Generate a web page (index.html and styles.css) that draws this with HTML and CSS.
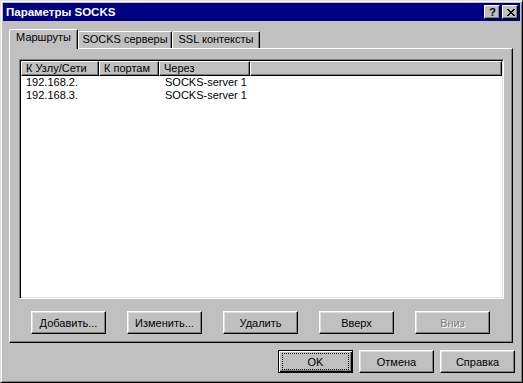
FILE: index.html
```html
<!DOCTYPE html>
<html lang="ru">
<head>
<meta charset="utf-8">
<title>Параметры SOCKS</title>
<link rel="stylesheet" href="styles.css">
</head>
<body>
<div class="window">
  <div class="titlebar">
    <span class="title">Параметры SOCKS</span>
    <div class="tbtns">
      <span class="tbtn help">?</span>
      <span class="tbtn close">
        <svg width="8" height="7" viewBox="0 0 8 7" shape-rendering="crispEdges">
          <path d="M0 0h2v1h-2zM6 0h2v1h-2zM1 1h2v1h-2zM5 1h2v1h-2zM2 2h4v1h-4zM3 3h2v1h-2zM2 4h4v1h-4zM1 5h2v1h-2zM5 5h2v1h-2zM0 6h2v1h-2zM6 6h2v1h-2z" fill="#000"/>
        </svg>
      </span>
    </div>
  </div>
  <div class="client">
    <div class="tabs">
      <div class="tab active t1">Маршруты</div>
      <div class="tab t2">SOCKS серверы</div>
      <div class="tab t3">SSL контексты</div>
    </div>
    <div class="panel">
      <div class="list">
        <div class="lhead">
          <div class="hc c1">К Узлу/Сети</div>
          <div class="hc c2">К портам</div>
          <div class="hc c3">Через</div>
          <div class="hc fill"></div>
        </div>
        <div class="row">
          <div class="cell c1">192.168.2.</div>
          <div class="cell c2"></div>
          <div class="cell c3">SOCKS-server 1</div>
        </div>
        <div class="row">
          <div class="cell c1">192.168.3.</div>
          <div class="cell c2"></div>
          <div class="cell c3">SOCKS-server 1</div>
        </div>
      </div>
      <div class="btnrow">
        <div class="btn">Добавить...</div>
        <div class="btn">Изменить...</div>
        <div class="btn">Удалить</div>
        <div class="btn">Вверх</div>
        <div class="btn disabled">Вниз</div>
      </div>
    </div>
    <div class="footer">
      <div class="btn default">OK</div>
      <div class="btn">Отмена</div>
      <div class="btn">Справка</div>
    </div>
  </div>
</div>
</body>
</html>
```
FILE: styles.css
```css
html, body {
  margin: 0;
  padding: 0;
  background: #c0c0c0;
}
body {
  font-family: "Liberation Sans", Arial, sans-serif;
  font-size: 11px;
  color: #000;
}
.window {
  width: 523px;
  height: 383px;
  box-sizing: border-box;
  background: #c0c0c0;
  border: 1px solid;
  border-color: #dfdfdf #000 #000 #dfdfdf;
  box-shadow: inset 1px 1px #fff, inset -1px -1px #808080;
  padding: 2px;
}
.titlebar {
  height: 18px;
  background: #000080;
  display: flex;
  align-items: center;
  justify-content: space-between;
  padding: 0 2px 0 3px;
}
.title {
  color: #fff;
  font-weight: bold;
  font-size: 11.5px;
  line-height: 18px;
}
.tbtns {
  display: flex;
  gap: 2px;
}
.tbtn {
  width: 16px;
  height: 14px;
  box-sizing: border-box;
  background: #c0c0c0;
  border: 1px solid;
  border-color: #fff #000 #000 #fff;
  box-shadow: inset -1px -1px #808080;
  display: flex;
  align-items: center;
  justify-content: center;
}
.help {
  font-weight: bold;
  font-size: 11px;
  line-height: 12px;
  padding-left: 1px;
}
.close svg {
  display: block;
  margin-left: 1px;
  margin-top: 0;
}
.client {
  padding: 8px 0 0 6px;
}
.tabs {
  display: flex;
  align-items: flex-end;
  height: 19px;
}
.tab {
  height: 17px;
  box-sizing: border-box;
  border: 1px solid;
  border-bottom: none;
  border-color: #fff #000 transparent #fff;
  box-shadow: inset -1px 0 #808080;
  border-radius: 2px 2px 0 0;
  background: #c0c0c0;
  padding-top: 1px;
  line-height: 13px;
  text-align: center;
  white-space: nowrap;
}
.tab.active {
  height: 20px;
  margin-bottom: -1px;
  position: relative;
  z-index: 1;
}
.t1 { width: 69px; }
.t2 { width: 94px; }
.t3 { width: 88px; }
.panel {
  width: 504px;
  height: 295px;
  box-sizing: border-box;
  border: 1px solid;
  border-color: #fff #000 #000 #fff;
  box-shadow: inset -1px -1px #808080;
  padding-top: 10px;
}
.list {
  width: 485px;
  height: 240px;
  box-sizing: border-box;
  margin-left: 9px;
  border: 1px solid;
  border-color: #808080 #fff #fff #808080;
  padding: 1px;
  box-shadow: inset 1px 1px #000, inset -1px -1px #dfdfdf;
  background: #fff;
}
.lhead {
  display: flex;
  height: 15px;
}
.hc {
  box-sizing: border-box;
  height: 15px;
  border: 1px solid;
  border-color: #fff #000 #000 #fff;
  box-shadow: inset -1px -1px #808080;
  background: #c0c0c0;
  padding-left: 4px;
  line-height: 13px;
  white-space: nowrap;
  overflow: hidden;
}
.c1 { width: 78px; flex: none; }
.c2 { width: 60px; flex: none; }
.c3 { width: 91px; flex: none; }
.fill { flex: 1; }
.row {
  display: flex;
  height: 13px;
  line-height: 13px;
}
.cell {
  box-sizing: border-box;
  padding-left: 5px;
  white-space: nowrap;
}
.row .c3 { padding-left: 6px; }
.btnrow {
  display: flex;
  gap: 21px;
  margin-top: 12px;
  padding-left: 21px;
}
.btn {
  width: 75px;
  height: 23px;
  box-sizing: border-box;
  background: #c0c0c0;
  border: 1px solid;
  border-color: #fff #000 #000 #fff;
  box-shadow: inset -1px -1px #808080, inset 1px 1px #dfdfdf;
  display: flex;
  align-items: center;
  justify-content: center;
  white-space: nowrap;
}
.btn.disabled {
  color: #808080;
  text-shadow: 1px 1px #fff;
}
.btn.default {
  border-color: #000;
  box-shadow: inset 1px 1px #fff, inset -1px -1px #000, inset -2px -2px #808080;
  position: relative;
}
.btn.default::after {
  content: "";
  position: absolute;
  left: 3px;
  top: 2px;
  right: 3px;
  bottom: 2px;
  border: 1px dotted #000;
}
.footer {
  width: 506px;
  display: flex;
  justify-content: flex-end;
  gap: 6px;
  margin-top: 7px;
}
```
